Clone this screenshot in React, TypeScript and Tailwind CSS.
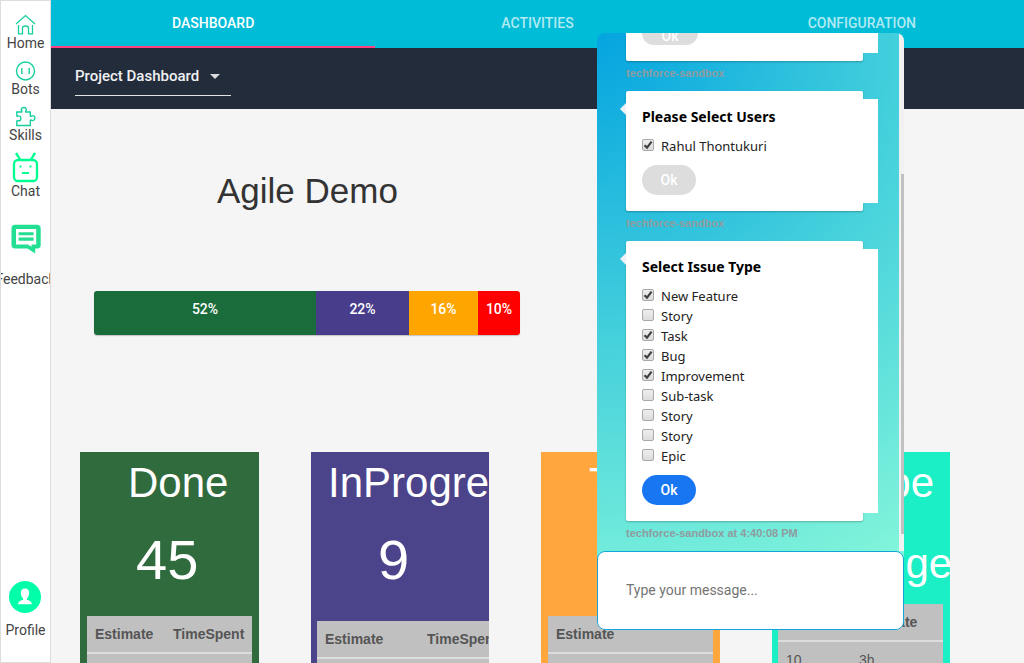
import type { ReactNode } from "react";

const sans = "font-['Liberation_Sans',Arial,sans-serif]";

function NavItem({ label, children, className }: { label: string; children: ReactNode; className: string }) {
  return (
    <a className={`flex flex-col items-center ${className}`}>
      {children}
      <span className="text-[14px] leading-4 whitespace-nowrap text-[#444]">{label}</span>
    </a>
  );
}

function Sidebar() {
  return (
    <aside className="flex h-[663px] w-[51px] shrink-0 flex-col items-center overflow-hidden border border-[#ddd] bg-white pt-[13px]">
      <NavItem label="Home" className="h-[46px]">
        <svg width="21" height="21" viewBox="0 0 21 21" fill="none" stroke="#15cf9c" strokeWidth="1.3" className="shrink-0">
          <path d="M1 10 L10.5 1.5 L20 10 M3.5 11 V19.8 H7.5 V14 Q7.5 12 10.5 12 Q13.5 12 13.5 14 V19.8 H17.5 V11" />
        </svg>
      </NavItem>
      <NavItem label="Bots" className="h-[46px]">
        <svg width="21" height="21" viewBox="0 0 21 21" fill="none" stroke="#15cf9c" strokeWidth="1.4" className="shrink-0">
          <circle cx="10.5" cy="11" r="9" />
          <path d="M6.8 8 V14 M14.2 8 V14" />
        </svg>
      </NavItem>
      <NavItem label="Skills" className="h-[46px]">
        <svg width="21" height="21" viewBox="0 0 21 21" fill="none" stroke="#15cf9c" strokeWidth="1.4" className="shrink-0">
          <path d="M1.8 6 H6.5 C7.8 6 6 4.5 6.3 3.2 C7 1 10.7 1 11.3 3.2 C11.7 4.5 9.8 6 11 6 H15.3 V9.7 C15.3 11.3 16.6 9.4 18 9.6 C20.6 10.2 20.6 14 18 14.6 C16.6 15 15.3 13 15.3 14.6 V19.5 H1.8 V15.2 C1.8 14 3 15 4 14.9 C6.6 14.5 6.6 10.4 4 9.9 C3 9.6 1.8 11 1.8 9.7 Z" />
        </svg>
      </NavItem>
      <NavItem label="Chat" className="h-[71px]">
        <svg width="27" height="31" viewBox="0 0 27 31" fill="none" stroke="#00ff91" className="shrink-0">
          <rect x="2" y="8" width="23" height="21" rx="4" strokeWidth="2.3" />
          <path d="M8 7.5 L4.7 2.2 M19 7.5 L22.3 2.2" strokeWidth="2.3" />
          <circle cx="4.7" cy="2" r="1" fill="#00ff91" />
          <circle cx="22.3" cy="2" r="1" fill="#00ff91" />
          <path d="M7.5 14.5 H9.5 M17.5 14.5 H19.5 M10 21 H17" strokeWidth="2" />
        </svg>
      </NavItem>
      <NavItem label="Feedback" className="mt-px h-[64px]">
        <svg width="30" height="30" viewBox="0 0 30 30" className="mb-[17px] shrink-0">
          <path d="M4 .8 H26 Q29.7 .8 29.7 4.5 V21 Q29.7 24.4 26.5 24.4 H24.2 V29.5 L16.5 24.4 H4 Q.5 24.4 .5 21 V4.5 Q.5 .8 4 .8Z" fill="#23df91" />
          <path d="M5 4.9 H25.2 V20.4 H20.6 V22.7 L16.8 20.4 H5Z" fill="white" />
          <path d="M7.6 9.8 H22.6 M7.6 15.1 H22.6" stroke="#23df91" strokeWidth="3.1" />
        </svg>
      </NavItem>
      <NavItem label="Profile" className="mt-auto mb-[24px]">
        <svg width="32" height="32" viewBox="0 0 32 32" className="mb-[9px] shrink-0">
          <circle cx="16" cy="16" r="16" fill="#00ffa8" />
          <path d="M16 7.5 C19 7.5 20.2 9.5 20.2 12 C20.2 14.5 18.8 17 17.8 17.6 V18.7 C20 19.5 22.8 20 22.8 23.2 H9.2 C9.2 20 12 19.5 14.2 18.7 V17.6 C13.2 17 11.8 14.5 11.8 12 C11.8 9.5 13 7.5 16 7.5Z" fill="white" />
        </svg>
      </NavItem>
    </aside>
  );
}

const tabs = [
  { name: "DASHBOARD", active: true },
  { name: "ACTIVITIES", active: false },
  { name: "CONFIGURATION", active: false },
];

const segments = [
  { label: "52%", className: "w-[222px] bg-[#1a6c3b]" },
  { label: "22%", className: "w-[93px] bg-[#483d8b]" },
  { label: "16%", className: "w-[69px] bg-[#ffa500]" },
  { label: "10%", className: "w-[42px] bg-[#ff0000]" },
];

type Card = {
  title: string;
  count: string;
  card: string;
  titleClass: string;
  countClass: string;
  tableClass: string;
  firstCol: string;
  headers: string[];
  row: string[];
};

const cards: Card[] = [
  { title: "Done", count: "45", card: "w-[179px] bg-[#2f6b3d]", titleClass: "pl-[48px] h-[62px]", countClass: "pl-[56px] h-[102px]", tableClass: "ml-[7px] w-[165px]", firstCol: "w-[78px]", headers: ["Estimate", "TimeSpent"], row: ["", ""] },
  { title: "InProgress", count: "9", card: "ml-[52px] w-[178px] bg-[#4b448a]", titleClass: "pl-[17px] h-[62px]", countClass: "pl-[67px] h-[107px]", tableClass: "ml-[6px] w-[220px]", firstCol: "w-[102px]", headers: ["Estimate", "TimeSpent"], row: ["", ""] },
  { title: "ToDo", count: "", card: "ml-[52px] w-[179px] bg-[#ffa73d]", titleClass: "pl-[48px] h-[62px]", countClass: "h-[102px]", tableClass: "ml-[7px] w-[165px]", firstCol: "w-[78px]", headers: ["Estimate", ""], row: ["", ""] },
  { title: "Scope", count: "Change", card: "ml-[52px] w-[178px] bg-[#1aefc5]", titleClass: "pl-[43px] h-[66px]", countClass: "pl-[33px] h-[86px] text-[42px]!", tableClass: "ml-[6px] w-[165px]", firstCol: "w-[73px]", headers: ["", "Estimate"], row: ["10", "3h"] },
];

function StatusCard({ c }: { c: Card }) {
  return (
    <section className={`h-[240px] shrink-0 overflow-hidden text-white ${c.card}`}>
      <h2 className={`text-[42px] leading-[62px] whitespace-nowrap ${c.titleClass}`}>{c.title}</h2>
      <div className={`text-[56px] leading-[92px] whitespace-nowrap ${c.countClass}`}>
        <span>{c.count}</span>
      </div>
      <div className={`bg-[#c0c0c0] text-[14px] text-[#555] ${c.tableClass}`}>
        <div className="flex h-[38px] border-b-2 border-[#ddd] pl-2 leading-[37px] font-bold">
          <span className={`shrink-0 ${c.firstCol}`}>{c.headers[0]}</span>
          <span>{c.headers[1]}</span>
        </div>
        <div className="flex h-[50px] pl-2 leading-[36px]">
          <span className={`shrink-0 ${c.firstCol}`}>{c.row[0]}</span>
          <span>{c.row[1]}</span>
        </div>
      </div>
    </section>
  );
}

function Check({ label, checked }: { label: string; checked: boolean }) {
  return (
    <label className="flex h-5 items-center">
      <span className="mr-[7px] mb-[3px] flex size-3 items-center justify-center rounded-[2px] border border-[#a8a8a8] bg-linear-to-b from-[#eeeeee] to-[#dcdcdc]">
        {checked && (
          <svg width="10" height="10" viewBox="0 0 10 10" fill="none" stroke="#404040" strokeWidth="2.2">
            <path d="M1.5 5.2 L4 7.6 L8.6 1.6" />
          </svg>
        )}
      </span>
      <span className="text-[13px] leading-5 text-[#222]">{label}</span>
    </label>
  );
}

function Bubble({ title, options, active, stamp }: { title: string; options: [string, boolean][]; active: boolean; stamp: string }) {
  return (
    <>
      <div className="relative w-[237px] rounded-[2px] bg-white py-2 shadow-[0_1px_2px_rgba(0,0,0,0.25)]">
        <svg width="6" height="12" viewBox="0 0 6 12" className="absolute top-[12px] -left-[6px]">
          <path d="M6 0 V12 L0 6Z" fill="#eef2f5" />
        </svg>
        <div className="w-[252px] bg-white pb-2 pl-4 font-['Noto_Sans','Open_Sans',sans-serif]">
          <h3 className="h-[37px] pt-[8px] text-[14px] leading-5 font-bold text-black">{title}</h3>
          {options.map(([label, checked], i) => (
            <Check key={i} label={label} checked={checked} />
          ))}
          <button className={`mt-[9px] block h-[30px] w-[54px] rounded-full font-[Roboto,sans-serif] text-[14px] font-medium text-white ${active ? "bg-[#1976f3]" : "bg-[#ddd]"}`}>Ok</button>
        </div>
      </div>
      <p className={`h-[30px] pt-[5px] text-[11px] leading-[15px] font-bold text-[#8f9c9f] ${sans}`}>{stamp}</p>
    </>
  );
}

function ChatPanel() {
  return (
    <div className="absolute top-[33px] left-[597px] flex h-[597px] w-[307px] flex-col overflow-hidden rounded-[8px]">
      <div className="flex h-[526px] bg-[radial-gradient(circle_at_0_0,#04a4e0,#44d0dc_50%,#84f6da)]">
        <div className="h-[518px] w-[302px] overflow-hidden pl-[29px]">
          <div className="relative h-[28px] w-[237px] rounded-b-[2px] bg-white shadow-[0_1px_2px_rgba(0,0,0,0.25)]">
            <div className="h-5 w-[252px] bg-white pl-4">
              <div className="h-3 w-[56px] overflow-hidden rounded-b-full bg-[#ddd]">
                <div className="-mt-[12px] text-center text-[14px] leading-[30px] font-medium text-white">Ok</div>
              </div>
            </div>
          </div>
          <p className={`h-[30px] pt-[5px] text-[11px] leading-[15px] font-bold text-[#8f9c9f] ${sans}`}>techforce-sandbox</p>
          <Bubble title="Please Select Users" options={[["Rahul Thontukuri", true]]} active={false} stamp="techforce-sandbox" />
          <Bubble
            title="Select Issue Type"
            options={[["New Feature", true], ["Story", false], ["Task", true], ["Bug", true], ["Improvement", true], ["Sub-task", false], ["Story", false], ["Story", false], ["Epic", false]]}
            active
            stamp="techforce-sandbox at 4:40:08 PM"
          />
        </div>
        <div className="flex h-[518px] w-[5px] flex-col items-end bg-[#f1f1f1] pt-[141px]">
          <div className="h-[360px] w-[3px] bg-[#c1c1c1]" />
        </div>
      </div>
      <div className="-mt-2 flex h-[79px] items-center rounded-[8px] border border-[#11a6d8] bg-white pl-[28px] text-[14px] text-[#757575]">Type your message...</div>
    </div>
  );
}

export default function App() {
  return (
    <div className="relative flex h-[663px] w-[1024px] overflow-hidden bg-[#f5f5f5] font-[Roboto,sans-serif]">
      <Sidebar />
      <main className="flex min-w-0 flex-1 flex-col">
        <nav className="grid h-12 shrink-0 grid-cols-3 bg-[#00bcd7] text-center text-[14px] leading-[46px] font-medium">
          {tabs.map((t) => (
            <span key={t.name} className={t.active ? "border-b-2 border-[#ff4081] text-white" : "text-white/70"}>{t.name}</span>
          ))}
        </nav>
        <header className="h-[61px] shrink-0 bg-[#232c3b] pl-6">
          <div className="flex h-12 w-[156px] items-center border-b border-[#e2e4e6] pt-[9px] text-[15px] font-medium text-[#f0f1f2]">
            <span>Project Dashboard</span>
            <svg width="10" height="5" viewBox="0 0 10 5" className="ml-[11px]"><path d="M0 0H10L5 5Z" fill="#dadcdf" /></svg>
          </div>
        </header>
        <div className={`flex-1 overflow-hidden pl-[29px] ${sans}`}>
          <h1 className="mt-[61px] ml-[137px] text-[35px] leading-[42px] text-[#333]">Agile Demo</h1>
          <div className="mt-[79px] ml-[14px] flex h-11 w-[426px] overflow-hidden rounded-[3px] text-center text-[14px] leading-[36px] text-white shadow-[0_1px_1px_rgba(0,0,0,0.2)]">
            {segments.map((s) => (
              <div key={s.label} className={s.className}><span className="font-[Roboto,sans-serif] font-medium">{s.label}</span></div>
            ))}
          </div>
          <div className="mt-[117px] flex">
            {cards.map((c) => <StatusCard key={c.title} c={c} />)}
          </div>
        </div>
      </main>
      <ChatPanel />
    </div>
  );
}
